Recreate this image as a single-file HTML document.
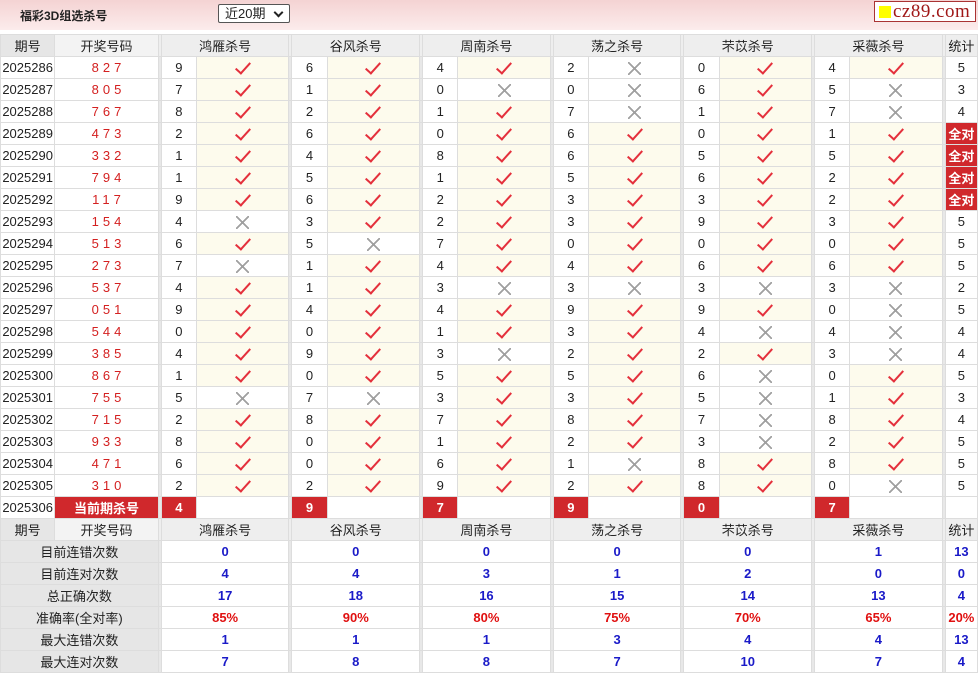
<!DOCTYPE html>
<html><head><meta charset="utf-8">
<style>
*{margin:0;padding:0;box-sizing:border-box}
body{width:978px;height:671px;overflow:hidden;background:#fff;font-family:"Liberation Sans","Noto Sans CJK SC",sans-serif;font-size:13px;color:#222}
.top{height:30px;background:linear-gradient(#f4d3d3,#fcecec);position:relative}
.title{position:absolute;left:20px;top:7px;font-weight:bold;font-size:12px;color:#222}
.sel{position:absolute;left:218px;top:4px;width:72px;height:19px;border:1px solid #555;background:#fff;font-size:13px;line-height:17px;padding-left:6px;border-radius:2px}
.sel:after{content:"";position:absolute;right:7px;top:4px;width:5px;height:5px;border-right:2px solid #222;border-bottom:2px solid #222;transform:rotate(45deg)}
.logo{position:absolute;left:874px;top:1px;width:102px;height:21px;border:1px solid #a33;background:#fff;font-family:"Liberation Serif",serif;font-size:19px;line-height:19px;color:#a01818;padding-left:18px;letter-spacing:0.5px}
.logo:before{content:"";position:absolute;left:4px;top:4px;width:12px;height:12px;background:#ff0}
table{position:absolute;top:34px;left:0;border-collapse:separate;border-spacing:1px;background:#ddd;table-layout:fixed;width:978px}
td{height:21px;text-align:center;background:#fff;white-space:nowrap;overflow:hidden}
tr.h td{background:#eee}
tr.h td.a{background:#e6e6e6}
tr.h td.b{background:#f3f3f3}
td.g{background:#e8e8e8}
td.c{color:#d42020;letter-spacing:4px;padding-left:4px}
td.y{background:#fdfbed;position:relative}
td.y:after{content:"";display:inline-block;width:6px;height:13px;border-right:2px solid #e4303c;border-bottom:2px solid #e4303c;transform:rotate(42deg);margin-top:-4px;vertical-align:middle}
td.n:after{content:"";display:inline-block;width:13px;height:13px;vertical-align:middle;background:linear-gradient(45deg,transparent 46%,#a0a0a0 46%,#a0a0a0 54%,transparent 54%),linear-gradient(-45deg,transparent 46%,#a0a0a0 46%,#a0a0a0 54%,transparent 54%)}
td.q{background:#d0282c;color:#fff;font-weight:bold}
td.L{background:#e6e6e6}
td.v{color:#1a1ac8;font-weight:bold}
td.r{color:#e01010;font-weight:bold}
</style></head><body>
<div class="top"><div class="title">福彩3D组选杀号</div><div class="sel">近20期</div><div class="logo">cz89.com</div></div>
<table>
<colgroup><col style="width:53px"><col style="width:102px"><col style="width:2px">
<col style="width:34px"><col style="width:91px"><col style="width:2px">
<col style="width:34px"><col style="width:91px"><col style="width:2px">
<col style="width:34px"><col style="width:91px"><col style="width:2px">
<col style="width:34px"><col style="width:91px"><col style="width:2px">
<col style="width:34px"><col style="width:91px"><col style="width:2px">
<col style="width:34px"><col style="width:91px"><col style="width:2px">
<col style="width:31px"></colgroup>
<tr class="h"><td class="a">期号</td><td class="b">开奖号码</td><td class="g"></td><td colspan="2">鸿雁杀号</td><td class="g"></td><td colspan="2">谷风杀号</td><td class="g"></td><td colspan="2">周南杀号</td><td class="g"></td><td colspan="2">荡之杀号</td><td class="g"></td><td colspan="2">芣苡杀号</td><td class="g"></td><td colspan="2">采薇杀号</td><td class="g"></td><td>统计</td></tr>
<tr><td>2025286</td><td class="c">827</td><td class="g"></td><td>9</td><td class="y"></td><td class="g"></td><td>6</td><td class="y"></td><td class="g"></td><td>4</td><td class="y"></td><td class="g"></td><td>2</td><td class="n"></td><td class="g"></td><td>0</td><td class="y"></td><td class="g"></td><td>4</td><td class="y"></td><td class="g"></td><td>5</td></tr>
<tr><td>2025287</td><td class="c">805</td><td class="g"></td><td>7</td><td class="y"></td><td class="g"></td><td>1</td><td class="y"></td><td class="g"></td><td>0</td><td class="n"></td><td class="g"></td><td>0</td><td class="n"></td><td class="g"></td><td>6</td><td class="y"></td><td class="g"></td><td>5</td><td class="n"></td><td class="g"></td><td>3</td></tr>
<tr><td>2025288</td><td class="c">767</td><td class="g"></td><td>8</td><td class="y"></td><td class="g"></td><td>2</td><td class="y"></td><td class="g"></td><td>1</td><td class="y"></td><td class="g"></td><td>7</td><td class="n"></td><td class="g"></td><td>1</td><td class="y"></td><td class="g"></td><td>7</td><td class="n"></td><td class="g"></td><td>4</td></tr>
<tr><td>2025289</td><td class="c">473</td><td class="g"></td><td>2</td><td class="y"></td><td class="g"></td><td>6</td><td class="y"></td><td class="g"></td><td>0</td><td class="y"></td><td class="g"></td><td>6</td><td class="y"></td><td class="g"></td><td>0</td><td class="y"></td><td class="g"></td><td>1</td><td class="y"></td><td class="g"></td><td class="q">全对</td></tr>
<tr><td>2025290</td><td class="c">332</td><td class="g"></td><td>1</td><td class="y"></td><td class="g"></td><td>4</td><td class="y"></td><td class="g"></td><td>8</td><td class="y"></td><td class="g"></td><td>6</td><td class="y"></td><td class="g"></td><td>5</td><td class="y"></td><td class="g"></td><td>5</td><td class="y"></td><td class="g"></td><td class="q">全对</td></tr>
<tr><td>2025291</td><td class="c">794</td><td class="g"></td><td>1</td><td class="y"></td><td class="g"></td><td>5</td><td class="y"></td><td class="g"></td><td>1</td><td class="y"></td><td class="g"></td><td>5</td><td class="y"></td><td class="g"></td><td>6</td><td class="y"></td><td class="g"></td><td>2</td><td class="y"></td><td class="g"></td><td class="q">全对</td></tr>
<tr><td>2025292</td><td class="c">117</td><td class="g"></td><td>9</td><td class="y"></td><td class="g"></td><td>6</td><td class="y"></td><td class="g"></td><td>2</td><td class="y"></td><td class="g"></td><td>3</td><td class="y"></td><td class="g"></td><td>3</td><td class="y"></td><td class="g"></td><td>2</td><td class="y"></td><td class="g"></td><td class="q">全对</td></tr>
<tr><td>2025293</td><td class="c">154</td><td class="g"></td><td>4</td><td class="n"></td><td class="g"></td><td>3</td><td class="y"></td><td class="g"></td><td>2</td><td class="y"></td><td class="g"></td><td>3</td><td class="y"></td><td class="g"></td><td>9</td><td class="y"></td><td class="g"></td><td>3</td><td class="y"></td><td class="g"></td><td>5</td></tr>
<tr><td>2025294</td><td class="c">513</td><td class="g"></td><td>6</td><td class="y"></td><td class="g"></td><td>5</td><td class="n"></td><td class="g"></td><td>7</td><td class="y"></td><td class="g"></td><td>0</td><td class="y"></td><td class="g"></td><td>0</td><td class="y"></td><td class="g"></td><td>0</td><td class="y"></td><td class="g"></td><td>5</td></tr>
<tr><td>2025295</td><td class="c">273</td><td class="g"></td><td>7</td><td class="n"></td><td class="g"></td><td>1</td><td class="y"></td><td class="g"></td><td>4</td><td class="y"></td><td class="g"></td><td>4</td><td class="y"></td><td class="g"></td><td>6</td><td class="y"></td><td class="g"></td><td>6</td><td class="y"></td><td class="g"></td><td>5</td></tr>
<tr><td>2025296</td><td class="c">537</td><td class="g"></td><td>4</td><td class="y"></td><td class="g"></td><td>1</td><td class="y"></td><td class="g"></td><td>3</td><td class="n"></td><td class="g"></td><td>3</td><td class="n"></td><td class="g"></td><td>3</td><td class="n"></td><td class="g"></td><td>3</td><td class="n"></td><td class="g"></td><td>2</td></tr>
<tr><td>2025297</td><td class="c">051</td><td class="g"></td><td>9</td><td class="y"></td><td class="g"></td><td>4</td><td class="y"></td><td class="g"></td><td>4</td><td class="y"></td><td class="g"></td><td>9</td><td class="y"></td><td class="g"></td><td>9</td><td class="y"></td><td class="g"></td><td>0</td><td class="n"></td><td class="g"></td><td>5</td></tr>
<tr><td>2025298</td><td class="c">544</td><td class="g"></td><td>0</td><td class="y"></td><td class="g"></td><td>0</td><td class="y"></td><td class="g"></td><td>1</td><td class="y"></td><td class="g"></td><td>3</td><td class="y"></td><td class="g"></td><td>4</td><td class="n"></td><td class="g"></td><td>4</td><td class="n"></td><td class="g"></td><td>4</td></tr>
<tr><td>2025299</td><td class="c">385</td><td class="g"></td><td>4</td><td class="y"></td><td class="g"></td><td>9</td><td class="y"></td><td class="g"></td><td>3</td><td class="n"></td><td class="g"></td><td>2</td><td class="y"></td><td class="g"></td><td>2</td><td class="y"></td><td class="g"></td><td>3</td><td class="n"></td><td class="g"></td><td>4</td></tr>
<tr><td>2025300</td><td class="c">867</td><td class="g"></td><td>1</td><td class="y"></td><td class="g"></td><td>0</td><td class="y"></td><td class="g"></td><td>5</td><td class="y"></td><td class="g"></td><td>5</td><td class="y"></td><td class="g"></td><td>6</td><td class="n"></td><td class="g"></td><td>0</td><td class="y"></td><td class="g"></td><td>5</td></tr>
<tr><td>2025301</td><td class="c">755</td><td class="g"></td><td>5</td><td class="n"></td><td class="g"></td><td>7</td><td class="n"></td><td class="g"></td><td>3</td><td class="y"></td><td class="g"></td><td>3</td><td class="y"></td><td class="g"></td><td>5</td><td class="n"></td><td class="g"></td><td>1</td><td class="y"></td><td class="g"></td><td>3</td></tr>
<tr><td>2025302</td><td class="c">715</td><td class="g"></td><td>2</td><td class="y"></td><td class="g"></td><td>8</td><td class="y"></td><td class="g"></td><td>7</td><td class="y"></td><td class="g"></td><td>8</td><td class="y"></td><td class="g"></td><td>7</td><td class="n"></td><td class="g"></td><td>8</td><td class="y"></td><td class="g"></td><td>4</td></tr>
<tr><td>2025303</td><td class="c">933</td><td class="g"></td><td>8</td><td class="y"></td><td class="g"></td><td>0</td><td class="y"></td><td class="g"></td><td>1</td><td class="y"></td><td class="g"></td><td>2</td><td class="y"></td><td class="g"></td><td>3</td><td class="n"></td><td class="g"></td><td>2</td><td class="y"></td><td class="g"></td><td>5</td></tr>
<tr><td>2025304</td><td class="c">471</td><td class="g"></td><td>6</td><td class="y"></td><td class="g"></td><td>0</td><td class="y"></td><td class="g"></td><td>6</td><td class="y"></td><td class="g"></td><td>1</td><td class="n"></td><td class="g"></td><td>8</td><td class="y"></td><td class="g"></td><td>8</td><td class="y"></td><td class="g"></td><td>5</td></tr>
<tr><td>2025305</td><td class="c">310</td><td class="g"></td><td>2</td><td class="y"></td><td class="g"></td><td>2</td><td class="y"></td><td class="g"></td><td>9</td><td class="y"></td><td class="g"></td><td>2</td><td class="y"></td><td class="g"></td><td>8</td><td class="y"></td><td class="g"></td><td>0</td><td class="n"></td><td class="g"></td><td>5</td></tr>
<tr><td>2025306</td><td class="q">当前期杀号</td><td class="g"></td><td class="q">4</td><td></td><td class="g"></td><td class="q">9</td><td></td><td class="g"></td><td class="q">7</td><td></td><td class="g"></td><td class="q">9</td><td></td><td class="g"></td><td class="q">0</td><td></td><td class="g"></td><td class="q">7</td><td></td><td class="g"></td><td></td></tr>
<tr class="h"><td class="a">期号</td><td class="b">开奖号码</td><td class="g"></td><td colspan="2">鸿雁杀号</td><td class="g"></td><td colspan="2">谷风杀号</td><td class="g"></td><td colspan="2">周南杀号</td><td class="g"></td><td colspan="2">荡之杀号</td><td class="g"></td><td colspan="2">芣苡杀号</td><td class="g"></td><td colspan="2">采薇杀号</td><td class="g"></td><td>统计</td></tr>
<tr><td class="L" colspan="2">目前连错次数</td><td class="g"></td><td class="v" colspan="2">0</td><td class="g"></td><td class="v" colspan="2">0</td><td class="g"></td><td class="v" colspan="2">0</td><td class="g"></td><td class="v" colspan="2">0</td><td class="g"></td><td class="v" colspan="2">0</td><td class="g"></td><td class="v" colspan="2">1</td><td class="g"></td><td class="v">13</td></tr>
<tr><td class="L" colspan="2">目前连对次数</td><td class="g"></td><td class="v" colspan="2">4</td><td class="g"></td><td class="v" colspan="2">4</td><td class="g"></td><td class="v" colspan="2">3</td><td class="g"></td><td class="v" colspan="2">1</td><td class="g"></td><td class="v" colspan="2">2</td><td class="g"></td><td class="v" colspan="2">0</td><td class="g"></td><td class="v">0</td></tr>
<tr><td class="L" colspan="2">总正确次数</td><td class="g"></td><td class="v" colspan="2">17</td><td class="g"></td><td class="v" colspan="2">18</td><td class="g"></td><td class="v" colspan="2">16</td><td class="g"></td><td class="v" colspan="2">15</td><td class="g"></td><td class="v" colspan="2">14</td><td class="g"></td><td class="v" colspan="2">13</td><td class="g"></td><td class="v">4</td></tr>
<tr><td class="L" colspan="2">准确率(全对率)</td><td class="g"></td><td class="r" colspan="2">85%</td><td class="g"></td><td class="r" colspan="2">90%</td><td class="g"></td><td class="r" colspan="2">80%</td><td class="g"></td><td class="r" colspan="2">75%</td><td class="g"></td><td class="r" colspan="2">70%</td><td class="g"></td><td class="r" colspan="2">65%</td><td class="g"></td><td class="r">20%</td></tr>
<tr><td class="L" colspan="2">最大连错次数</td><td class="g"></td><td class="v" colspan="2">1</td><td class="g"></td><td class="v" colspan="2">1</td><td class="g"></td><td class="v" colspan="2">1</td><td class="g"></td><td class="v" colspan="2">3</td><td class="g"></td><td class="v" colspan="2">4</td><td class="g"></td><td class="v" colspan="2">4</td><td class="g"></td><td class="v">13</td></tr>
<tr><td class="L" colspan="2">最大连对次数</td><td class="g"></td><td class="v" colspan="2">7</td><td class="g"></td><td class="v" colspan="2">8</td><td class="g"></td><td class="v" colspan="2">8</td><td class="g"></td><td class="v" colspan="2">7</td><td class="g"></td><td class="v" colspan="2">10</td><td class="g"></td><td class="v" colspan="2">7</td><td class="g"></td><td class="v">4</td></tr>
</table>
</body></html>
